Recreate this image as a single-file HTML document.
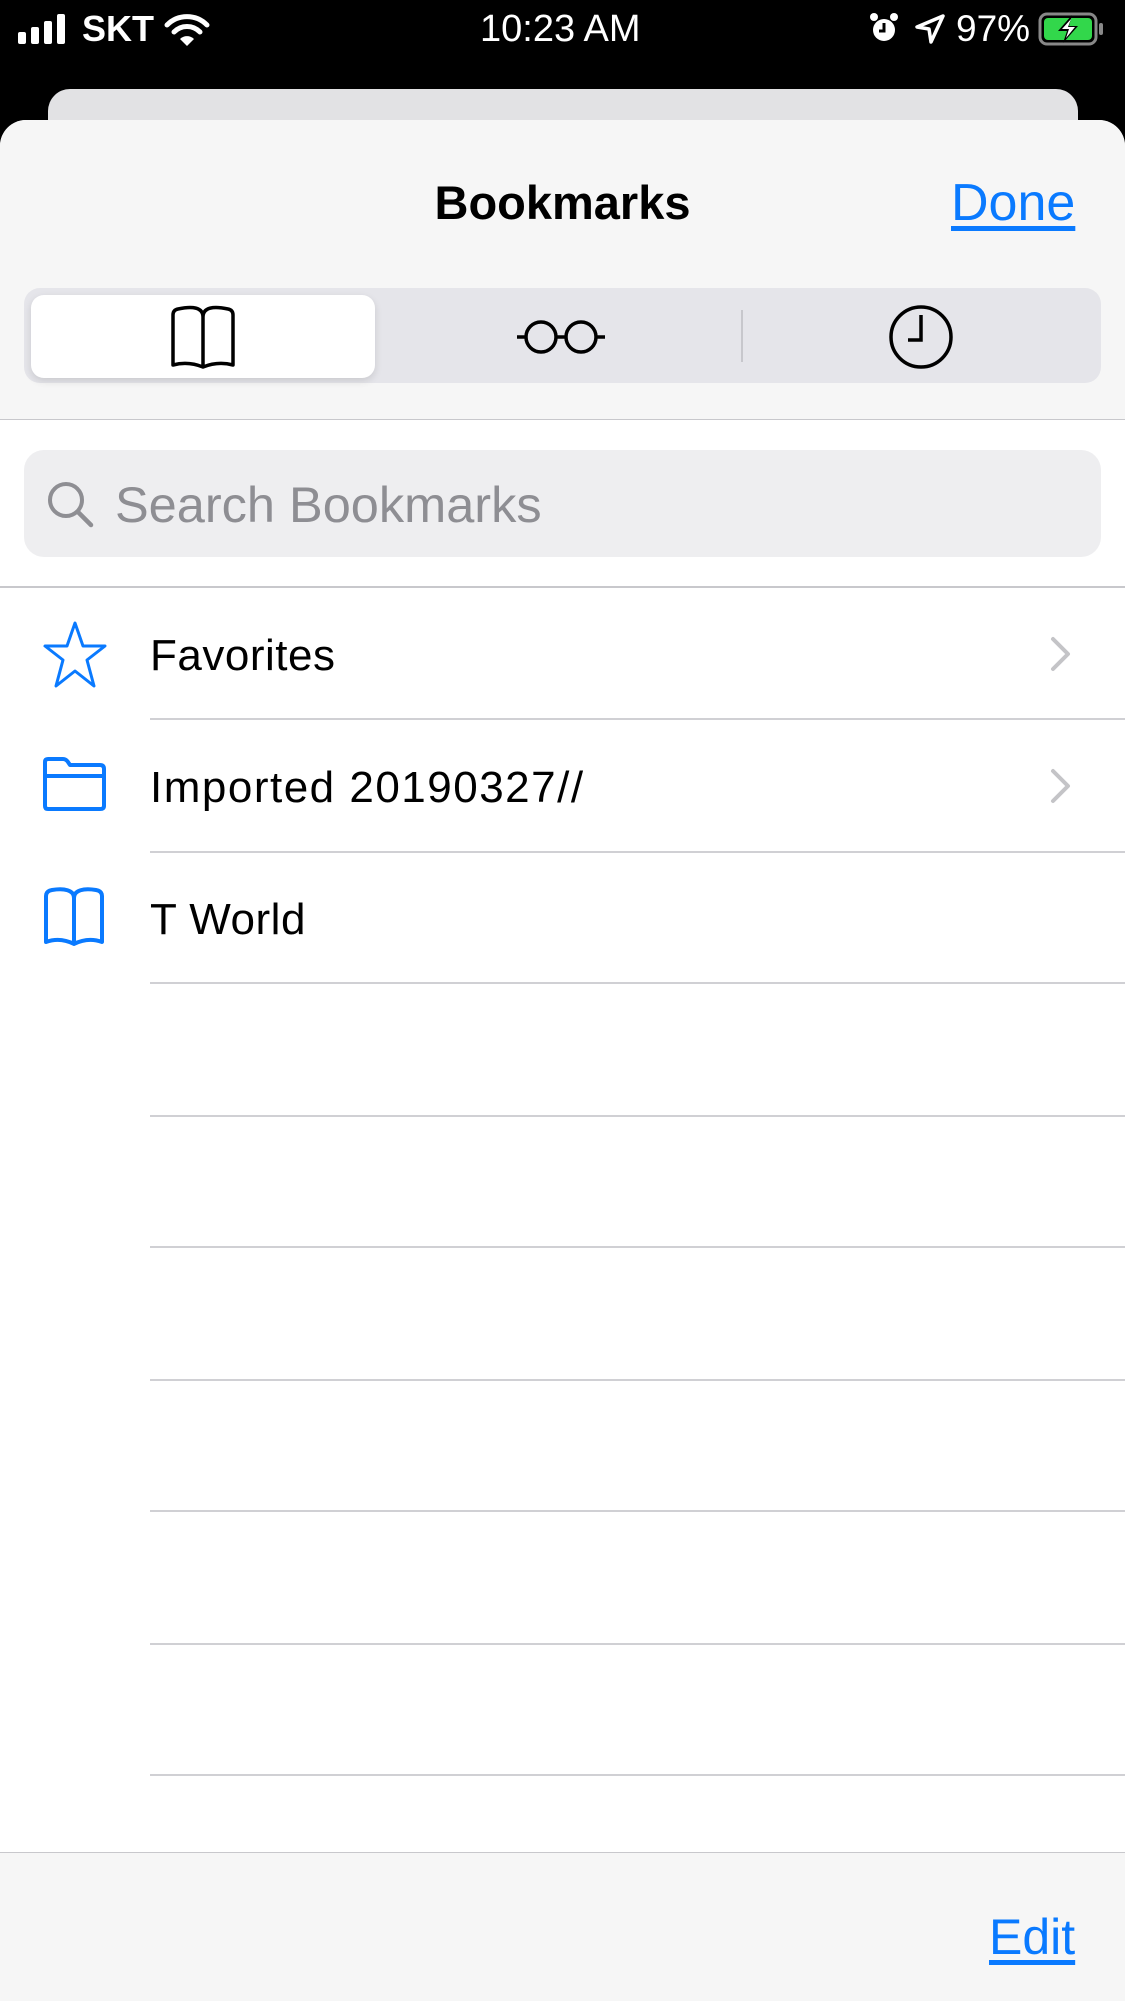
<!DOCTYPE html>
<html><head><meta charset="utf-8"><style>
*{margin:0;padding:0;box-sizing:border-box}
body{width:1125px;height:2001px;background:#000;font-family:"Liberation Sans",sans-serif;position:relative;overflow:hidden}
.abs{position:absolute}
.sb{color:#fff;font-size:36px;font-weight:bold}
.sheet{position:absolute;left:0;top:120px;width:1125px;height:1881px;background:#fff;border-radius:26px 26px 0 0;overflow:hidden}
.hdr{position:absolute;left:0;top:0;width:1125px;height:300px;background:#f6f6f6;border-bottom:1.5px solid #c8c8cc}
.sep{position:absolute;left:150px;right:0;height:1.5px;background:#d0d0d4}
.row{position:absolute;left:150px;font-size:44px;color:#000;line-height:1}
</style></head><body>
<svg class="abs" style="left:18px;top:14px" width="55" height="30"><rect x="0" y="18" width="8" height="12" rx="2" fill="#fff"/><rect x="13" y="13" width="8" height="17" rx="2" fill="#fff"/><rect x="26" y="7" width="8" height="23" rx="2" fill="#fff"/><rect x="39" y="0" width="8" height="30" rx="2" fill="#fff"/></svg>
<div class="abs sb" style="left:82px;top:8px">SKT</div>
<svg class="abs" style="left:163px;top:12px" width="48" height="36" viewBox="0 0 48 36"><path d="M4 13 A28 28 0 0 1 44 13" stroke="#fff" stroke-width="5" fill="none" stroke-linecap="round"/><path d="M11 20 A18 18 0 0 1 37 20" stroke="#fff" stroke-width="5" fill="none" stroke-linecap="round"/><path d="M24 34 L17 27 A10 10 0 0 1 31 27 Z" fill="#fff"/></svg>
<div class="abs sb" style="left:480px;top:8px;font-weight:normal;font-size:38px">10:23 AM</div>
<svg class="abs" style="left:868px;top:12px" width="32" height="34" viewBox="0 0 32 34"><circle cx="16" cy="18" r="11" fill="#fff"/><path d="M16 11v8h-5" stroke="#000" stroke-width="3" fill="none"/><circle cx="6" cy="5" r="4" fill="#fff"/><circle cx="26" cy="5" r="4" fill="#fff"/></svg>
<svg class="abs" style="left:915px;top:14px" width="30" height="30" viewBox="0 0 30 30"><path d="M28 2 L2 13 L14 15 L16 28 Z" stroke="#fff" stroke-width="3.5" fill="none" stroke-linejoin="round"/></svg>
<div class="abs sb" style="left:956px;top:8px;font-weight:normal;font-size:37px">97%</div>
<svg class="abs" style="left:1038px;top:12px" width="70" height="34" viewBox="0 0 70 34"><rect x="2" y="2" width="56" height="30" rx="7" stroke="#888" stroke-width="3" fill="none"/><rect x="6" y="6" width="48" height="22" rx="4" fill="#32d74b"/><rect x="61" y="11" width="4" height="12" rx="2" fill="#888"/><path d="M34 3 L20 19 H29 L25 31 L40 14 H31 Z" fill="#000"/><path d="M33 7 L24 17 H31 L28 26 L37 15 H30 Z" fill="#fff"/></svg>
<div class="abs" style="left:48px;top:89px;width:1030px;height:60px;background:#e2e2e4;border-radius:22px 22px 0 0"></div>
<div class="sheet">
 <div class="hdr">
  <div class="abs" style="left:0;width:1125px;top:55px;text-align:center;font-size:47px;font-weight:bold;color:#000">Bookmarks</div>
  <div class="abs" style="left:951px;top:53px;font-size:52px;color:#0a7aff;text-decoration:underline;text-underline-offset:6px">Done</div>
  <div class="abs" style="left:24px;top:168px;width:1077px;height:95px;background:#e5e5ea;border-radius:16px"></div>
  <div class="abs" style="left:31px;top:175px;width:344px;height:83px;background:#fff;border-radius:13px;box-shadow:0 3px 8px rgba(0,0,0,.12)"></div>
  <div class="abs" style="left:741px;top:190px;width:2px;height:52px;background:#c7c7cc"></div>
  <svg class="abs" style="left:168px;top:183px" width="70" height="66" viewBox="0 0 70 66"><path d="M35 14 C35 4 24 3 10 6 Q5 7 5 12 V62 Q20 58 35 64 Q50 58 65 62 V12 Q65 7 60 6 C46 3 35 4 35 14 V64" stroke="#000" stroke-width="3.5" fill="none" stroke-linejoin="round"/></svg>
  <svg class="abs" style="left:514px;top:196px" width="94" height="42" viewBox="0 0 94 42"><circle cx="27" cy="21" r="15" stroke="#000" stroke-width="3.5" fill="none"/><circle cx="67" cy="21" r="15" stroke="#000" stroke-width="3.5" fill="none"/><path d="M42 21h10M3 21h9M82 21h9" stroke="#000" stroke-width="3.5"/></svg>
  <svg class="abs" style="left:887px;top:183px" width="68" height="68" viewBox="0 0 68 68"><circle cx="34" cy="34" r="30" stroke="#000" stroke-width="3.5" fill="none"/><path d="M34 12 V37 H21" stroke="#000" stroke-width="3.5" fill="none"/></svg>
 </div>
 <div class="abs" style="left:24px;top:330px;width:1077px;height:107px;background:#eeeef0;border-radius:20px"></div>
 <svg class="abs" style="left:46px;top:360px" width="50" height="50" viewBox="0 0 50 50"><circle cx="20" cy="20" r="16" stroke="#8e8e93" stroke-width="4" fill="none"/><path d="M32 32 L45 45" stroke="#8e8e93" stroke-width="4.5" stroke-linecap="round"/></svg>
 <div class="abs" style="left:115px;top:355px;font-size:50.5px;color:#8e8e93">Search Bookmarks</div>
 <div class="abs" style="left:0;right:0;top:466px;height:1.5px;background:#c8c8cc"></div>
 <svg class="abs" style="left:42px;top:500px" width="66" height="70" viewBox="0 0 66 70"><path d="M33 3 L41 26 L63 26 L45 40 L52 66 L33 51 L14 66 L21 40 L3 26 L25 26 Z" stroke="#0a7aff" stroke-width="3" fill="none" stroke-linejoin="round"/></svg>
 <div class="row" style="top:514px;letter-spacing:0.5px">Favorites</div>
 <svg class="abs" style="left:1049px;top:515px" width="24" height="38" viewBox="0 0 24 38"><path d="M4 4 L19 19 L4 34" stroke="#c4c4c7" stroke-width="4" fill="none" stroke-linecap="round" stroke-linejoin="round"/></svg>
 <div class="sep" style="top:598px"></div>
 <svg class="abs" style="left:41px;top:636px" width="66" height="56" viewBox="0 0 66 56"><path d="M4 6 Q4 3 7 3 H22 Q25 3 27 6 L29 9 H59 Q63 9 63 13 V50 Q63 53 59 53 H7 Q4 53 4 50 Z M4 20 H63" stroke="#0a7aff" stroke-width="4" fill="none" stroke-linejoin="round"/></svg>
 <div class="row" style="top:646px;letter-spacing:1.5px">Imported 20190327//</div>
 <svg class="abs" style="left:1049px;top:647px" width="24" height="38" viewBox="0 0 24 38"><path d="M4 4 L19 19 L4 34" stroke="#c4c4c7" stroke-width="4" fill="none" stroke-linecap="round" stroke-linejoin="round"/></svg>
 <div class="sep" style="top:731px"></div>
 <svg class="abs" style="left:42px;top:766px" width="64" height="60" viewBox="0 0 64 60"><path d="M32 12 C32 4 22 2 10 4 Q4 5 4 10 V56 Q18 51 32 58 Q46 51 60 56 V10 Q60 5 54 4 C42 2 32 4 32 12 V58" stroke="#0a7aff" stroke-width="4" fill="none" stroke-linejoin="round"/></svg>
 <div class="row" style="top:778px;letter-spacing:0.5px">T World</div>
 <div class="sep" style="top:862px"></div>
 <div class="sep" style="top:995px"></div>
 <div class="sep" style="top:1126px"></div>
 <div class="sep" style="top:1259px"></div>
 <div class="sep" style="top:1390px"></div>
 <div class="sep" style="top:1523px"></div>
 <div class="sep" style="top:1654px"></div>
 <div class="abs" style="left:0;top:1732px;width:1125px;height:149px;background:#f6f6f6;border-top:1.5px solid #c8c8cc"></div>
 <div class="abs" style="left:989px;top:1788px;font-size:50px;color:#0a7aff;text-decoration:underline;text-underline-offset:6px">Edit</div>
</div>
</body></html>
